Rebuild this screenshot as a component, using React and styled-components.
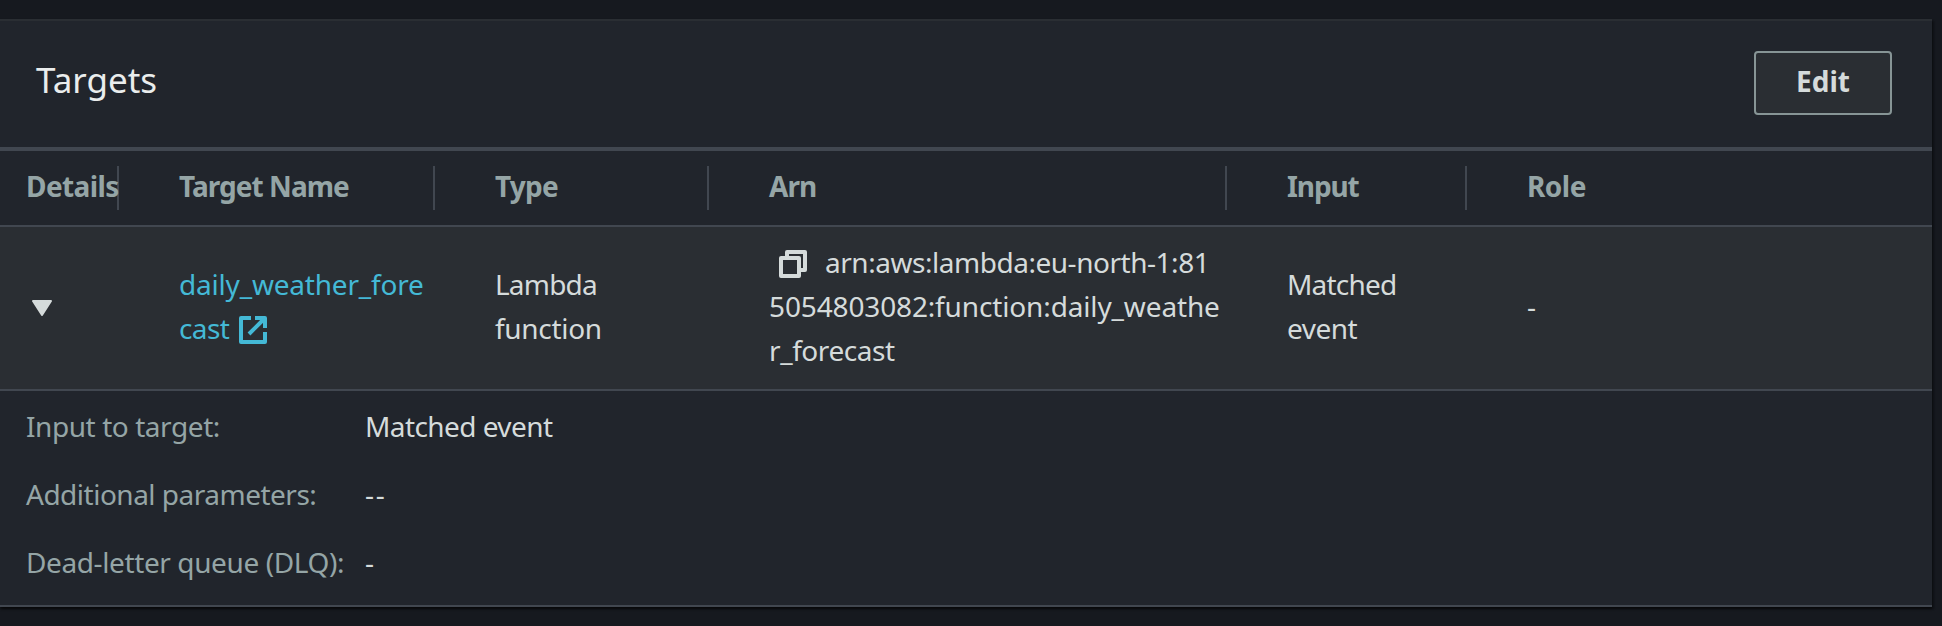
import React from "react";
import styled, { createGlobalStyle } from "styled-components";

const Global = createGlobalStyle`
  * { box-sizing: border-box; }
  html, body { margin: 0; background: #16191f; }
  body {
    font-family: "Noto Sans", "Open Sans", sans-serif;
    font-size: 28px;
    line-height: 44px;
    color: #d5dbdb;
    overflow: hidden;
  }
`;

const Page = styled.main`
  height: 626px;
  padding-top: 19px;
  background: #16191f;
`;

const Panel = styled.section`
  width: 1932px;
  height: 588px;
  background: #21252c;
  border-top: 2px solid #2a2e33;
  box-shadow: 0 2px 2px rgba(0, 0, 0, 0.5), 2px 2px 2px rgba(0, 0, 0, 0.3);
`;

const PanelHeader = styled.header`
  height: 126px;
  display: flex;
  align-items: flex-start;
  justify-content: space-between;
  padding: 30px 40px 0 36px;
`;

const Title = styled.h2`
  margin: 0;
  padding-top: 7px;
  font-size: 35px;
  line-height: 44px;
  font-weight: 400;
  color: #eaeded;
`;

const Button = styled.button`
  width: 138px;
  height: 64px;
  padding: 0 0 4px;
  border: 2px solid #879596;
  border-radius: 4px;
  background: #2a2e33;
  color: #d5dbdb;
  font: 700 28px/44px "Noto Sans", sans-serif;
`;

const Row = styled.div`
  display: grid;
  grid-template-columns: 119px 316px 274px 518px 240px 1fr;
`;

const HeadRow = styled(Row)`
  height: 80px;
  border-top: 4px solid #414750;
  border-bottom: 2px solid #414750;
  padding: 15px 0;
`;

const HeadCell = styled.div`
  height: 44px;
  padding-left: ${(p) => (p.$first ? 26 : 60)}px;
  border-right: ${(p) => (p.$last ? 0 : 2)}px solid #414750;
  font-weight: 700;
  color: #95a5a6;
  white-space: nowrap;
`;

const BodyRow = styled(Row)`
  height: 164px;
  align-items: center;
  background: #2a2e33;
  border-bottom: 2px solid #414750;
`;

const Cell = styled.div`
  padding-left: ${(p) => (p.$first ? 32 : 60)}px;
  white-space: nowrap;
`;

const Line = styled.div`
  height: 44px;
  display: flex;
  align-items: center;
`;

const Text = styled.span`
  display: block;
  line-height: 40px;
  padding-bottom: 4px;
  letter-spacing: ${(p) => p.$ls || 0}px;
`;

const Link = styled.a`
  color: #44b9d6;
  text-decoration: none;
`;

const Icon = styled.svg`
  display: block;
  flex: none;
  margin: ${(p) => p.$m || 0};
`;

const Details = styled.dl`
  margin: 0;
  height: 216px;
  padding: 15px 0 0 26px;
  display: grid;
  grid-template-columns: 339px 1fr;
  grid-auto-rows: 44px;
  row-gap: 24px;
  border-bottom: 2px solid #414750;
  white-space: nowrap;
`;

const Term = styled.dt`
  color: #95a5a6;
`;

const Value = styled.dd`
  margin: 0;
`;

const columns = [
  ["Details", -0.62],
  ["Target Name", -0.95],
  ["Type", -0.8],
  ["Arn", -1],
  ["Input", -1.1],
  ["Role", -0.5],
];

const details = [
  ["Input to target:", -0.43, "Matched event", -0.57],
  ["Additional parameters:", -0.5, "--", 1.75],
  ["Dead-letter queue (DLQ):", -0.39, "-", 0],
];

const Caret = () => (
  <Icon width="20" height="16" viewBox="0 0 20 16">
    <path d="M1 1h18L10 15z" fill="#d5dbdb" stroke="#d5dbdb" strokeWidth="2" strokeLinejoin="round" />
  </Icon>
);

const External = () => (
  <Icon $m="0 0 0 10px" width="28" height="28" viewBox="0 0 28 28" fill="none" stroke="#44b9d6" strokeWidth="4" strokeLinejoin="round">
    <path d="M12 2H2v24h24V16" />
    <path d="M16 2h10v10M25 3L10 18" />
    <path d="M20 3h5v5z" fill="#44b9d6" stroke="none" />
  </Icon>
);

const Copy = () => (
  <Icon $m="0 18px 0 10px" width="28" height="28" viewBox="0 0 28 28" fill="none" stroke="#d5dbdb" strokeWidth="4" strokeLinejoin="round">
    <path d="M2 8h18v18H2zM8 8V2h18v18h-6" />
  </Icon>
);

export default function App() {
  return (
    <Page>
      <Global />
      <Panel>
        <PanelHeader>
          <Title>Targets</Title>
          <Button>Edit</Button>
        </PanelHeader>
        <HeadRow>
          {columns.map(([name, ls], i) => (
            <HeadCell key={name} $first={i === 0} $last={i === columns.length - 1}>
              <Text $ls={ls}>{name}</Text>
            </HeadCell>
          ))}
        </HeadRow>
        <BodyRow>
          <Cell $first>
            <Caret />
          </Cell>
          <Cell>
            <Link>
              <Line><Text $ls={-0.2}>daily_weather_fore</Text></Line>
              <Line><Text $ls={-0.6}>cast</Text><External /></Line>
            </Link>
          </Cell>
          <Cell>
            <Line><Text $ls={-0.8}>Lambda</Text></Line>
            <Line><Text $ls={-0.3}>function</Text></Line>
          </Cell>
          <Cell>
            <Line><Copy /><Text $ls={-0.47}>arn:aws:lambda:eu-north-1:81</Text></Line>
            <Line><Text $ls={-0.14}>5054803082:function:daily_weathe</Text></Line>
            <Line><Text $ls={-0.43}>r_forecast</Text></Line>
          </Cell>
          <Cell>
            <Line><Text $ls={-0.8}>Matched</Text></Line>
            <Line><Text $ls={-0.5}>event</Text></Line>
          </Cell>
          <Cell>
            <Line><Text>-</Text></Line>
          </Cell>
        </BodyRow>
        <Details>
          {details.map(([term, tls, value, vls]) => (
            <React.Fragment key={term}>
              <Term><Text $ls={tls}>{term}</Text></Term>
              <Value><Text $ls={vls}>{value}</Text></Value>
            </React.Fragment>
          ))}
        </Details>
      </Panel>
    </Page>
  );
}
